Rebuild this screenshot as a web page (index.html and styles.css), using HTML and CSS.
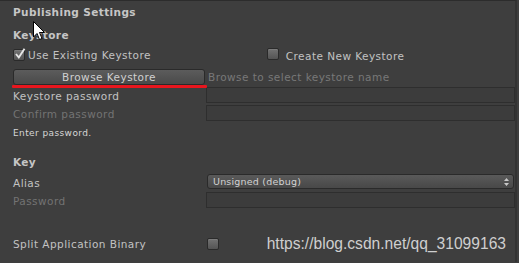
FILE: index.html
```html
<!DOCTYPE html>
<html>
<head>
<meta charset="utf-8">
<link rel="stylesheet" href="styles.css">
</head>
<body>
<div class="panel">
  <div class="row title bold">Publishing Settings</div>
  <div class="row section bold">Keystore</div>
  <div class="row checkrow">
    <div class="col-left check-label">
      <span class="checkbox"><svg class="tick" width="12" height="12" viewBox="0 0 12 12"><path d="M2 6 L4.8 9.5 L10.5 0.8" fill="none" stroke="#e6e6e6" stroke-width="1.9"/></svg></span>
      <span>Use Existing Keystore</span>
    </div>
    <div class="col-right check-label create">
      <span class="checkbox"></span>
      <span>Create New Keystore</span>
    </div>
  </div>
  <div class="row browserow">
    <div class="button">Browse Keystore</div>
    <div class="hint">Browse to select keystore name</div>
    <div class="redline"></div>
  </div>
  <div class="row fieldrow kp">
    <div class="col-left">Keystore password</div>
    <div class="field"></div>
  </div>
  <div class="row fieldrow disabled">
    <div class="col-left">Confirm password</div>
    <div class="field"></div>
  </div>
  <div class="row small">Enter password.</div>
  <div class="row section key bold">Key</div>
  <div class="row fieldrow alias">
    <div class="col-left">Alias</div>
    <div class="popup">
      <span>Unsigned (debug)</span>
      <svg class="arrows" width="5" height="8" viewBox="0 0 5 8"><path d="M2.5 0 L5 3 L0 3 Z M0 5 L5 5 L2.5 8 Z" fill="#c8c8c8"/></svg>
    </div>
  </div>
  <div class="row fieldrow disabled">
    <div class="col-left">Password</div>
    <div class="field"></div>
  </div>
  <div class="row split">
    <div class="col-left">Split Application Binary</div>
    <span class="checkbox"></span>
  </div>
  <div class="watermark">https://blog.csdn.net/qq_31099163</div>
  <svg class="cursor" width="13" height="20" viewBox="0 0 13 20"><path d="M0.5 0.5 L0.5 16 L4 12.5 L6.5 18.5 L9 17.5 L6.5 11.5 L11.5 11.5 Z" fill="#ffffff" stroke="#000000" stroke-width="1"/></svg>
</div>
</body>
</html>
```
FILE: styles.css
```css
html, body {
  margin: 0;
  padding: 0;
  background: #3e3e3e;
}
.panel {
  position: relative;
  width: 517px;
  height: 262px;
  border-top: 1px solid #2c2c2c;
  border-right: 2px solid #333333;
  padding: 3px 0 0 13px;
  box-sizing: border-box;
  font-family: "DejaVu Sans", Verdana, sans-serif;
  font-size: 10.5px;
  color: #c2c2c2;
  letter-spacing: 0.45px;
  overflow: hidden;
}
.row {
  display: flex;
  align-items: center;
  height: 16px;
  white-space: nowrap;
}
.bold {
  font-weight: bold;
  color: #c6c6c6;
  letter-spacing: 0.4px;
}
.title { height: 16px; }
.section { margin-top: 7px; }
.checkrow { margin-top: 4px; }
.col-left {
  width: 193px;
  flex: none;
  display: flex;
  align-items: center;
}
.check-label .checkbox { margin-right: 3px; }
.create { margin-left: 61px; }
.checkbox {
  position: relative;
  width: 12px;
  height: 12px;
  box-sizing: border-box;
  border: 1px solid #2a2a2a;
  border-radius: 2px;
  background: linear-gradient(#727272, #545454);
  box-shadow: inset 0 1px 0 rgba(255,255,255,0.08);
  display: inline-block;
  flex: none;
}
.tick {
  position: absolute;
  left: 0;
  top: -2px;
}
.browserow {
  position: relative;
  margin-top: 6px;
}
.button {
  width: 192px;
  height: 16px;
  box-sizing: border-box;
  border: 1px solid #2a2a2a;
  border-radius: 3px;
  background: linear-gradient(#5c5c5c, #4a4a4a);
  color: #d0d0d0;
  text-align: center;
  line-height: 14px;
  flex: none;
}
.hint {
  margin-left: 3px;
  color: #787878;
}
.redline {
  position: absolute;
  left: -1px;
  top: 16px;
  width: 195px;
  height: 3px;
  background: #e8161e;
  border-radius: 1px;
}
.fieldrow {
  height: 18px;
}
.kp { margin-top: 2px; }
.field {
  width: 309px;
  height: 16px;
  box-sizing: border-box;
  border: 1px solid #2e2e2e;
  background: #3c3c3c;
  align-self: flex-start;
}
.disabled .col-left { color: #737373; }
.small {
  font-size: 9px;
  color: #d6d6d6;
  height: 16px;
  margin-top: 2px;
  letter-spacing: 0.4px;
}
.key { margin-top: 13px; }
.alias { margin-top: 4px; }
.popup {
  width: 307px;
  height: 15px;
  margin-left: 1px;
  box-sizing: border-box;
  border: 1px solid #2a2a2a;
  border-radius: 3px;
  background: linear-gradient(#5a5a5a, #484848);
  display: flex;
  align-items: center;
  justify-content: space-between;
  padding: 0 4px 0 5px;
  color: #d2d2d2;
  font-size: 9.5px;
  letter-spacing: 0.2px;
  align-self: flex-start;
}
.split { margin-top: 26px; }
.split .checkbox { margin-left: 1px; }
.watermark {
  position: absolute;
  right: 9px;
  top: 234px;
  font-family: "Liberation Sans", Arial, sans-serif;
  font-size: 15.6px;
  letter-spacing: 0;
  color: #cfcfcf;
}
.cursor {
  position: absolute;
  left: 33px;
  top: 20px;
}
```
